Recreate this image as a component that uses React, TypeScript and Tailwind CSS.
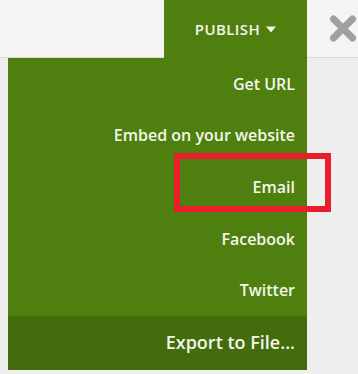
import React from "react";

const items = ["Get URL", "Embed on your website", "Email", "Facebook", "Twitter"];

export default function App() {
  return (
    <div
      className="relative w-[358px] h-[374px] overflow-hidden bg-[#eeeeee]"
      style={{ fontFamily: '"Open Sans", "Noto Sans", sans-serif' }}
    >
      {/* top bar */}
      <div className="flex h-[58px] justify-end bg-[#f4f4f4] border-b border-[#dadada]">
        <div className="flex w-[143px] items-center justify-center gap-[6px] bg-[#4e7f0f] -mb-px text-[15px] font-semibold tracking-[0.4px] text-[#f4f6ea]">
          <span>PUBLISH</span>
          <svg width="10" height="7" viewBox="0 0 10 7">
            <path d="M0 0.5h10L5 6.5z" fill="#f4f6ea" />
          </svg>
        </div>
        <div className="flex w-[51px] items-center justify-center pl-[20px]">
          <svg width="28" height="27" viewBox="0 0 28 27">
            <path
              d="M4.5 4L23.5 23M23.5 4L4.5 23"
              stroke="#a0a0a0"
              strokeWidth="7"
              strokeLinecap="round"
            />
          </svg>
        </div>
      </div>

      {/* menu */}
      <div className="ml-[8px] w-[299px] bg-[#4e7f0f] text-[#f4f6ea]">
        {items.map((label) => (
          <div
            key={label}
            className="flex h-[51.6px] items-center justify-end pr-[12px] text-[16px] font-semibold"
          >
            {label}
          </div>
        ))}
        <div className="flex h-[54px] items-center justify-end bg-[#436c0c] pr-[12px] text-[18px] font-semibold">
          Export to File...
        </div>
      </div>

      {/* highlight */}
      <div className="absolute left-[174px] top-[153px] h-[59px] w-[157px] border-[6px] border-[#e61f2a]" />
    </div>
  );
}
